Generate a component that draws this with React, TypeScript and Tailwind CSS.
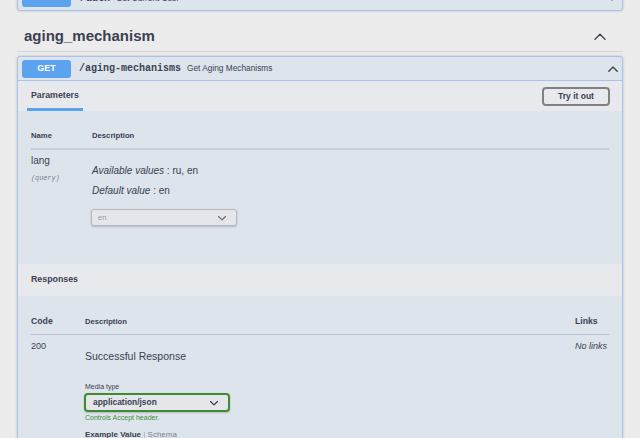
import React from "react";

const ChevronUp = ({ w, h, color, sw }: { w: number; h: number; color: string; sw: number }) => (
  <svg width={w} height={h} viewBox="0 0 12 7" fill="none">
    <path d="M1 6.2 L6 1.2 L11 6.2" stroke={color} strokeWidth={sw} strokeLinecap="round" strokeLinejoin="round" />
  </svg>
);

const SelectArrow = ({ color }: { color: string }) => (
  <svg width="8" height="6" viewBox="5.5 7 9 6">
    <path
      fill={color}
      d="M13.418 7.859a.695.695 0 01.978 0 .68.68 0 010 .969l-3.908 3.83a.697.697 0 01-.979 0l-3.908-3.83a.68.68 0 010-.969.695.695 0 01.978 0L10 11l3.418-3.141z"
    />
  </svg>
);

export default function App() {
  return (
    <div className="w-[640px] h-[438px] overflow-hidden bg-[#ececec] px-[17px] font-['Liberation_Sans',Arial,sans-serif] text-[#3b4151]">
      {/* previous collapsed operation */}
      <div className="-mt-[15px] h-[26px] border border-[#a9c4ec] bg-[#dde4ec] rounded-[3px] shadow-[0_0_3px_rgba(0,0,0,0.19)] flex items-center pl-[4px] pr-[5px]">
        <span className="w-[49px] h-[18px] rounded-[3px] bg-[#5ca3ef] text-white text-[9px] font-bold flex items-center justify-center">
          GET
        </span>
        <span className="ml-[9px] font-['Liberation_Mono',monospace] font-bold text-[10px]">/auth</span>
        <span className="ml-[6px] text-[8.3px]">Get Current User</span>
        <span className="ml-auto rotate-180 flex">
          <ChevronUp w={10} h={6} color="#3b4151" sw={1.6} />
        </span>
      </div>

      {/* tag header */}
      <div className="flex items-center justify-between pt-[16px] pb-[6px] pl-[7px] pr-[17px] border-b border-[#d3d7dd]">
        <h3 className="text-[15px] leading-[18px] font-bold">aging_mechanism</h3>
        <ChevronUp w={12} h={7} color="#3b4151" sw={1.3} />
      </div>

      {/* operation block */}
      <div className="mt-[4px] border border-[#a9c4ec] bg-[#dde4ec] rounded-[3px] shadow-[0_0_3px_rgba(0,0,0,0.19)]">
        {/* summary */}
        <div className="h-[24px] border-b border-[#a9c4ec] flex items-center pl-[4px] pr-[4px]">
          <span className="w-[49px] h-[18px] rounded-[3px] bg-[#5ca3ef] text-white text-[9px] font-bold flex items-center justify-center">
            GET
          </span>
          <span className="ml-[8px] font-['Liberation_Mono',monospace] font-bold text-[10px]">/aging-mechanisms</span>
          <span className="ml-[6px] text-[8.3px]">Get Aging Mechanisms</span>
          <span className="ml-auto flex">
            <ChevronUp w={10} h={6} color="#3b4151" sw={1.6} />
          </span>
        </div>

        {/* parameters header */}
        <div className="h-[30px] bg-[#e8e9ed] flex items-stretch justify-between pl-[9px] pr-[12px]">
          <div className="flex items-center px-[4px] pt-[3px] border-b-[3px] border-[#5ca3ef] text-[8.8px] font-bold">
            Parameters
          </div>
          <div className="flex items-center">
            <button className="h-[19px] w-[68px] border-2 border-[#808084] rounded-[4px] text-[8.5px] font-bold text-[#3b4151] flex items-center justify-center">
              Try it out
            </button>
          </div>
        </div>

        {/* parameters body */}
        <div className="px-[13px] pt-[20px] pb-[38px]">
          <div className="flex border-b-2 border-[#c8cfd9] pb-[7px] text-[7.7px] leading-[10px] font-bold">
            <div className="w-[61px]">Name</div>
            <div>Description</div>
          </div>
          <div className="flex">
            <div className="w-[61px] pt-[5px]">
              <div className="text-[10px] leading-[12px]">lang</div>
              <div className="mt-[7px] text-[6.8px] leading-[8px] italic text-[#7e838d] font-['Liberation_Mono',monospace]">
                (query)
              </div>
            </div>
            <div className="pt-[15px]">
              <div className="text-[10px] leading-[12px]">
                <i>Available values</i> : ru, en
              </div>
              <div className="mt-[8px] text-[10px] leading-[12px]">
                <i>Default value</i> : en
              </div>
              <div className="mt-[12px] -ml-[1px] flex items-center justify-between h-[17px] w-[146px] border border-[#b6b9bf] rounded-[3px] bg-[#e5e6e9] shadow-[0_1px_2px_rgba(0,0,0,0.2)] pl-[6px] pr-[10px] text-[7.5px] text-[#9a9ca3]">
                <span>en</span>
                <SelectArrow color="#6b6f78" />
              </div>
            </div>
          </div>
        </div>

        {/* responses header */}
        <div className="h-[32px] bg-[#e8e9ed] flex items-center pl-[13px] text-[8.8px] font-bold">Responses</div>

        {/* responses body */}
        <div className="px-[13px] pt-[20px]">
          <div className="flex items-center border-b border-[#b8bfca] pb-[7px] leading-[11px] font-bold">
            <div className="w-[54px] text-[8.7px]">Code</div>
            <div className="flex-1 text-[7.6px]">Description</div>
            <div className="w-[34px] text-[8.7px]">Links</div>
          </div>
          <div className="flex">
            <div className="w-[54px] pt-[6px] text-[9px] leading-[11px]">200</div>
            <div className="flex-1 pt-[15px]">
              <div className="text-[10.5px] leading-[12px]">Successful Response</div>
              <div className="mt-[20px] text-[7px] leading-[9px]">Media type</div>
              <div className="mt-[2px] -ml-[1px] flex items-center justify-between h-[19px] w-[146px] border-2 border-[#3f8a33] rounded-[4px] bg-[#e5e6e9] shadow-[0_1px_2px_rgba(0,0,0,0.2)] pl-[7px] pr-[10px]">
                <span className="text-[8.4px] font-bold">application/json</span>
                <SelectArrow color="#3b4151" />
              </div>
              <div className="mt-[1px] text-[7px] leading-[9px] text-[#3f8f35]">Controls Accept header.</div>
              <div className="mt-[8px] text-[8px] leading-[10px]">
                <span className="font-bold">Example Value</span>
                <span className="text-[#9aa0a8]"> | </span>
                <span className="text-[#7e838d]">Schema</span>
              </div>
            </div>
            <div className="w-[34px] pt-[6px] text-[9px] leading-[11px] italic whitespace-nowrap">No links</div>
          </div>
        </div>
      </div>
    </div>
  );
}
